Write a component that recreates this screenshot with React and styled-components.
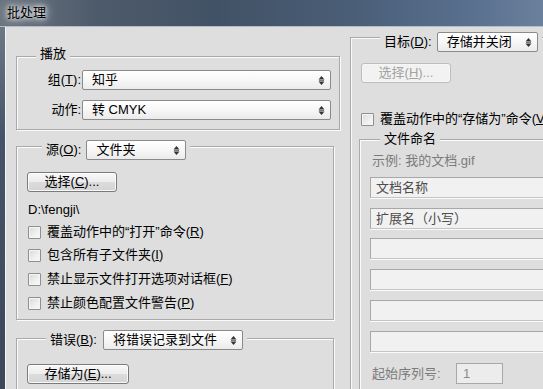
import React from 'react';
import styled, { createGlobalStyle } from 'styled-components';

const Global = createGlobalStyle`
  *, *::before, *::after { box-sizing: border-box; }
  html, body { margin: 0; padding: 0; overflow: hidden; background: #3e4c5e; }
  body {
    font-family: "Liberation Sans", "Noto Sans CJK SC", sans-serif;
    font-size: 13px;
    line-height: 16px;
    color: #000;
  }
`;

const Window = styled.div`
  width: 543px;
  height: 389px;
  overflow: hidden;
  display: flex;
  flex-direction: column;
`;

const TitleBar = styled.div`
  height: 27px;
  flex: none;
  display: flex;
  align-items: center;
  padding-left: 7px;
  padding-bottom: 1px;
  background: linear-gradient(90deg, #6b7580 0%, #4d5a6a 18%, #425266 40%, #4a5e77 65%, #5a7190 88%, #6b809c 100%);
  border-bottom: 1px solid #b4bdc7;
  font-size: 13px;
  color: #000;
  text-shadow: 0 0 4px #fff, 0 0 8px rgba(255, 255, 255, 0.9), 0 0 12px rgba(255, 255, 255, 0.6);
`;

const Frame = styled.div`
  flex: 1;
  min-height: 0;
  display: flex;
  padding-left: 5px;
  background: linear-gradient(180deg, #6d7885 0%, #45546a 30%, #3a4858 100%);
`;

const Body = styled.div`
  flex: 1;
  min-width: 0;
  display: flex;
  gap: 10px;
  padding-left: 10px;
  background: #dedede;
  border-left: 1px solid #f6f6f6;
  overflow: hidden;
`;

const Column = styled.div`
  flex: none;
  width: ${(p) => p.$w}px;
  display: flex;
  flex-direction: column;
  align-items: flex-start;
  padding-top: ${(p) => p.$pt}px;
`;

const Group = styled.div`
  flex: none;
  width: ${(p) => p.$w}px;
  margin-top: ${(p) => p.$mt || 0}px;
  margin-left: ${(p) => p.$ml || 0}px;
  padding: 0 0 ${(p) => p.$pb || 0}px ${(p) => p.$pl || 0}px;
  border: 1px solid #a9a9a9;
  box-shadow: inset 1px 1px 0 #fbfbfb, 1px 1px 0 #fbfbfb;
  display: flex;
  flex-direction: column;
  align-items: flex-start;
`;

const Header = styled.div`
  display: flex;
  align-items: center;
  gap: ${(p) => p.$gap || 0}px;
  padding: 0 4px;
  background: #dedede;
  margin-top: ${(p) => p.$mt}px;
  margin-left: ${(p) => p.$ml}px;
  white-space: nowrap;
`;

const U = styled.span`
  text-decoration: underline;
  text-underline-offset: 1px;
`;

const Row = styled.div`
  display: flex;
  align-items: center;
  gap: ${(p) => p.$gap || 0}px;
  margin-top: ${(p) => p.$mt || 0}px;
  margin-left: ${(p) => p.$ml || 0}px;
  white-space: nowrap;
`;

const Label = styled.span`
  width: ${(p) => (p.$w ? `${p.$w}px` : 'auto')};
  text-align: ${(p) => p.$align || 'left'};
  color: ${(p) => (p.$dim ? '#7b7b7b' : '#000')};
  flex: none;
`;

const SelectBox = styled.div`
  width: ${(p) => p.$w}px;
  height: 20px;
  flex: none;
  display: flex;
  align-items: center;
  justify-content: space-between;
  padding: 0 5px 0 9px;
  border: 1px solid #8a8a8a;
  border-radius: 2px;
  background: linear-gradient(180deg, #ffffff 0%, #f7f7f7 50%, #ebebeb 100%);
  box-shadow: inset 0 1px 0 #fff;
  white-space: nowrap;
`;

const Button = styled.div`
  width: ${(p) => p.$w}px;
  height: 20px;
  flex: none;
  margin-top: ${(p) => p.$mt || 0}px;
  display: flex;
  align-items: center;
  justify-content: center;
  border: 1px solid ${(p) => (p.$disabled ? '#bdbdbd' : '#7a7a7a')};
  border-radius: 3px;
  background: ${(p) =>
    p.$disabled
      ? '#f2f2f2'
      : 'linear-gradient(180deg, #f8f8f8 0%, #ececec 50%, #dcdcdc 51%, #d4d4d4 100%)'};
  box-shadow: inset 0 0 0 1px ${(p) => (p.$disabled ? '#f6f6f6' : 'rgba(255,255,255,0.8)')};
  color: ${(p) => (p.$disabled ? '#a3a3a3' : '#000')};
  white-space: nowrap;
`;

const Box = styled.span`
  width: 13px;
  height: 13px;
  flex: none;
  border: 1px solid #8e8f8f;
  border-radius: 1px;
  background: linear-gradient(135deg, #dadada 0%, #f0f0f0 60%, #fafafa 100%);
  box-shadow: inset 0 0 0 1px #f4f4f4;
`;

const Field = styled.div`
  width: 240px;
  height: 21px;
  flex: none;
  margin-top: ${(p) => p.$mt || 0}px;
  display: flex;
  align-items: center;
  padding-left: 5px;
  border: 1px solid #a8a8a8;
  border-bottom-color: #c4c4c4;
  background: #f1f1f1;
  box-shadow: 0 1px 0 #fafafa;
  color: #4d4d4d;
  white-space: nowrap;
`;

const SmallInput = styled.div`
  width: 47px;
  height: 21px;
  flex: none;
  display: flex;
  align-items: center;
  padding-left: 6px;
  border: 1px solid #a8a8a8;
  background: #ececec;
  color: #8a8a8a;
`;

const Arrows = () => (
  <svg width="7" height="11" viewBox="0 0 7 11">
    <path d="M0.5 4.5 L3.5 1 L6.5 4.5 Z" fill="#333" />
    <rect x="1" y="5" width="5" height="1" fill="#777" />
    <path d="M0.5 6.5 L3.5 10 L6.5 6.5 Z" fill="#333" />
  </svg>
);

const Select = ({ w, children }) => (
  <SelectBox $w={w}>
    <span>{children}</span>
    <Arrows />
  </SelectBox>
);

const Check = ({ mt, ml, children }) => (
  <Row $mt={mt} $ml={ml} $gap={6}>
    <Box />
    <span>{children}</span>
  </Row>
);

export default function App() {
  return (
    <>
      <Global />
      <Window>
        <TitleBar>批处理</TitleBar>
        <Frame>
          <Body>
            <Column $w={324} $pt={29}>
              <Group $w={324} $pb={9}>
                <Header $mt={-11} $ml={19}>播放</Header>
                <Row $mt={8} $gap={1}>
                  <Label $w={64} $align="right">
                    组(<U>T</U>):
                  </Label>
                  <Select w={249}>知乎</Select>
                </Row>
                <Row $mt={10} $gap={1}>
                  <Label $w={64} $align="right">动作:</Label>
                  <Select w={249}>转 CMYK</Select>
                </Row>
              </Group>

              <Group $w={318} $mt={16} $pl={10} $pb={8}>
                <Header $mt={-7} $ml={15} $gap={5}>
                  <Label>
                    源(<U>O</U>):
                  </Label>
                  <Select w={100}>文件夹</Select>
                </Header>
                <Button $w={90} $mt={12}>
                  选择(<U>C</U>)...
                </Button>
                <Row $mt={10} $ml={1}>D:\fengji\</Row>
                <Check mt={6} ml={1}>
                  覆盖动作中的“打开”命令(<U>R</U>)
                </Check>
                <Check mt={7} ml={1}>
                  包含所有子文件夹(<U>I</U>)
                </Check>
                <Check mt={8} ml={1}>
                  禁止显示文件打开选项对话框(<U>F</U>)
                </Check>
                <Check mt={8} ml={1}>
                  禁止颜色配置文件警告(<U>P</U>)
                </Check>
              </Group>

              <Group $w={318} $mt={18} $pl={10} $pb={30}>
                <Header $mt={-9} $ml={19} $gap={6}>
                  <Label>
                    错误(<U>B</U>):
                  </Label>
                  <Select w={140}>将错误记录到文件</Select>
                </Header>
                <Button $w={102} $mt={14}>
                  存储为(<U>E</U>)...
                </Button>
              </Group>
            </Column>

            <Column $w={260} $pt={10}>
              <Group $w={260} $pl={10} $pb={40}>
                <Header $mt={-6} $ml={19} $gap={5}>
                  <Label>
                    目标(<U>D</U>):
                  </Label>
                  <Select w={101}>存储并关闭</Select>
                </Header>
                <Button $w={90} $mt={11} $disabled>
                  选择(<U>H</U>)...
                </Button>
                <Check mt={28}>
                  覆盖动作中的“存储为”命令(<U>V</U>)
                </Check>

                <Group $w={250} $mt={12} $ml={-2} $pl={10} $pb={20}>
                  <Header $mt={-9} $ml={10}>文件命名</Header>
                  <Row $mt={6} $ml={2}>
                    <Label $dim>示例: 我的文档.gif</Label>
                  </Row>
                  <Field $mt={8}>文档名称</Field>
                  <Field $mt={10}>扩展名（小写）</Field>
                  <Field $mt={9} />
                  <Field $mt={10} />
                  <Field $mt={10} />
                  <Field $mt={10} />
                  <Row $mt={11} $ml={2}>
                    <Label $w={84} $dim>起始序列号:</Label>
                    <SmallInput>1</SmallInput>
                  </Row>
                </Group>
              </Group>
            </Column>
          </Body>
        </Frame>
      </Window>
    </>
  );
}
